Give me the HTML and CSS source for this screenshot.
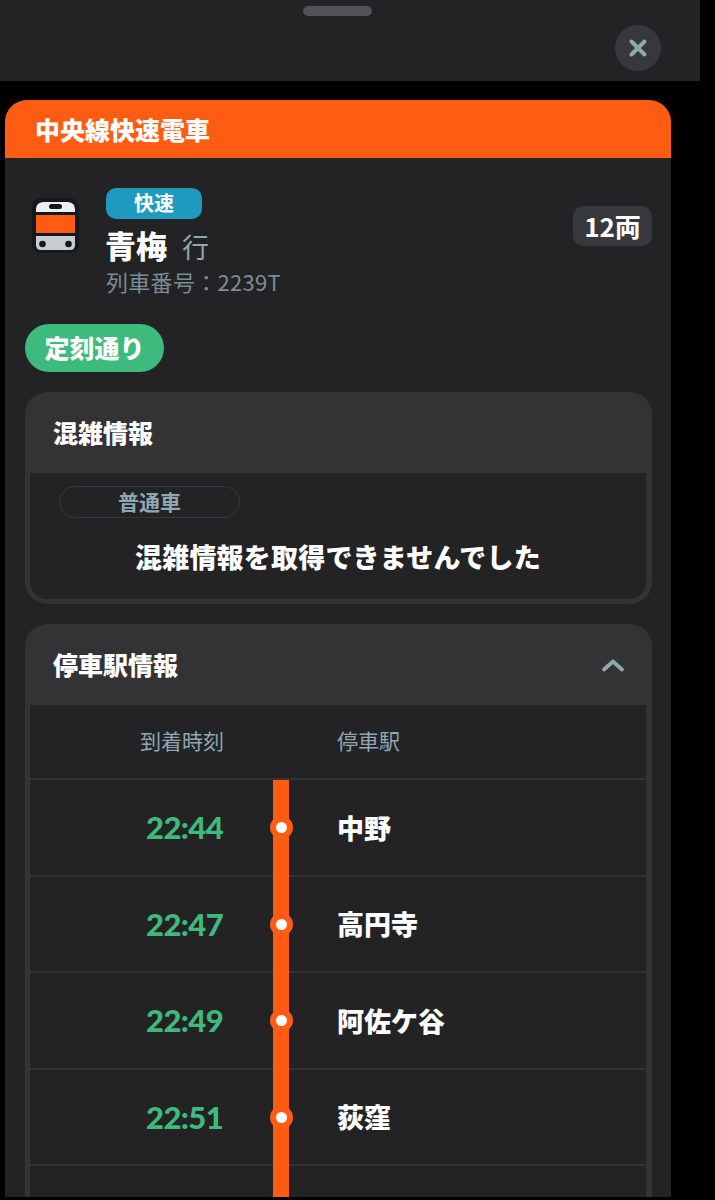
FILE: index.html
```html
<!DOCTYPE html>
<html lang="ja">
<head>
<meta charset="utf-8">
<title>中央線快速電車</title>
<link rel="stylesheet" href="styles.css">
</head>
<body>
<div class="page">
  <header class="sheet-top">
    <div class="grabber"></div>
    <button class="close" aria-label="閉じる">
      <svg width="20" height="20" viewBox="0 0 20 20"><path d="M3.500 3.500 L16.500 16.500 M16.500 3.500 L3.500 16.500" fill="none" stroke="#8fa6b3" stroke-width="4" stroke-linecap="round"/></svg>
    </button>
  </header>
  <main class="card">
    <div class="line-title">中央線快速電車</div>
    <div class="card-body">
      <div class="train">
        <svg class="train-icon" width="47" height="55" viewBox="0 0 47 55">
          <rect x="0" y="0" width="47" height="55" rx="9" fill="#14181f"/>
          <path d="M4 14 V11 Q4 5 11 4 H36 Q43 5 43 11 V14 Z" fill="#eceef0"/>
          <rect x="17" y="6" width="13" height="5" rx="2.500" fill="#14181f"/>
          <rect x="4" y="17" width="39" height="18" fill="#ff5c13"/>
          <path d="M4 38 H43 V47 Q43 52 38 52 H9 Q4 52 4 47 Z" fill="#c9ccd2"/>
          <circle cx="10.500" cy="46" r="3.300" fill="#14181f"/>
          <circle cx="36.500" cy="46" r="3.300" fill="#14181f"/>
        </svg>
        <div class="train-info">
          <span class="type-badge">快速</span>
          <div class="dest"><strong>青梅</strong><span>行</span></div>
          <div class="train-no">列車番号：2239T</div>
        </div>
        <span class="cars">12両</span>
      </div>
      <span class="status">定刻通り</span>

      <section class="panel panel-crowd">
        <h2 class="panel-head">混雑情報</h2>
        <div class="crowd-body">
          <div class="car-pill">普通車</div>
          <p class="crowd-msg">混雑情報を取得できませんでした</p>
        </div>
      </section>

      <section class="panel panel-stops">
        <h2 class="panel-head">停車駅情報
          <svg class="chevron" width="24" height="16" viewBox="0 0 24 16"><path d="M3 12.500 L12 4.500 L21 12.500" fill="none" stroke="#8fa6b3" stroke-width="3.800" stroke-linecap="round" stroke-linejoin="round"/></svg>
        </h2>
        <div class="stops">
          <div class="stops-head"><span class="col-time">到着時刻</span><span class="col-line"></span><span class="col-name">停車駅</span></div>
          <div class="stop"><span class="col-time">22:44</span><span class="col-line"><i class="dot"></i></span><span class="col-name">中野</span></div>
          <div class="stop"><span class="col-time">22:47</span><span class="col-line"><i class="dot"></i></span><span class="col-name">高円寺</span></div>
          <div class="stop"><span class="col-time">22:49</span><span class="col-line"><i class="dot"></i></span><span class="col-name">阿佐ケ谷</span></div>
          <div class="stop"><span class="col-time">22:51</span><span class="col-line"><i class="dot"></i></span><span class="col-name">荻窪</span></div>
          <div class="stop"><span class="col-time"></span><span class="col-line"></span><span class="col-name"></span></div>
        </div>
      </section>
    </div>
  </main>
</div>
</body>
</html>
```
FILE: styles.css
```css
* { box-sizing: border-box; }
html, body { margin: 0; height: 100%; background: #000; }
body {
  width: 715px;
  height: 1200px;
  overflow: hidden;
  font-family: "Noto Sans CJK JP", "Noto Sans", sans-serif;
  color: #fff;
}
.page { height: 1197px; overflow: hidden; }
.sheet-top {
  width: 700px;
  height: 81px;
  background: #232325;
  padding-top: 6px;
  display: flex;
  flex-direction: column;
}
.grabber {
  width: 69px;
  height: 10px;
  border-radius: 5px;
  background: #515156;
  margin-left: 303px;
}
.close {
  width: 46px;
  height: 46px;
  margin: 9px 0 0 615px;
  border: 0;
  padding: 0;
  border-radius: 50%;
  background: #37383b;
  display: flex;
  align-items: center;
  justify-content: center;
}
.card {
  width: 666px;
  margin: 19px 0 0 5px;
  height: 1097px;
  background: #232325;
  border-radius: 22px 22px 0 0;
  overflow: hidden;
}
.line-title {
  height: 58px;
  background: #ff5c13;
  padding-left: 30px;
  font-size: 25px;
  font-weight: 900;
  line-height: 58px;
}
.card-body { padding: 30px 19px 0 20px; }
.train { display: flex; height: 136px; }
.train-icon { margin: 10px 0 0 7px; flex: none; }
.train-info { margin-left: 27px; flex: 1; }
.type-badge {
  display: block;
  width: 96px;
  height: 31px;
  border-radius: 10px;
  background: #1f9abf;
  text-align: center;
  font-size: 20px;
  font-weight: 700;
  line-height: 30px;
}
.dest { display: flex; align-items: baseline; height: 48px; line-height: 51px; margin-left: -1px; }
.dest strong { font-size: 31px; font-weight: 900; }
.dest span { font-size: 27px; font-weight: 400; color: #8fa6b3; margin-left: 15px; }
.train-no { font-size: 22px; line-height: 28px; color: #7a8d98; letter-spacing: 0.3px; }
.cars {
  align-self: flex-start;
  margin-top: 18px;
  width: 79px;
  height: 40px;
  border-radius: 10px;
  background: #37383b;
  text-align: center;
  font-size: 26px;
  font-weight: 700;
  line-height: 39px;
}
.status {
  display: block;
  width: 139px;
  height: 48px;
  border-radius: 24px;
  background: #3dbb7c;
  text-align: center;
  font-size: 25px;
  font-weight: 900;
  line-height: 46px;
}
.panel {
  margin-top: 20px;
  width: 627px;
  border-radius: 22px;
  border: 5px solid #333335;
  border-right-width: 6px;
  border-top: 0;
  overflow: hidden;
}
.panel-head {
  margin: 0 -6px 0 -5px;
  height: 81px;
  background: #333335;
  padding: 0 28px;
  font-size: 25px;
  font-weight: 900;
  line-height: 79px;
  display: flex;
  align-items: center;
  justify-content: space-between;
}
.crowd-body { height: 126px; padding: 13px 0 0 29px; }
.car-pill {
  width: 181px;
  height: 32px;
  border: 1.500px solid #37383b;
  border-radius: 16px;
  text-align: center;
  font-size: 21px;
  font-weight: 700;
  line-height: 29px;
  color: #8fa6b3;
}
.crowd-msg {
  margin: 19px 0 0 76px;
  font-size: 27px;
  font-weight: 900;
  line-height: 40px;
  letter-spacing: 0.2px;
}
.chevron { margin-right: -1px; }
.stops-head, .stop {
  display: grid;
  grid-template-columns: 243px 16px 1fr;
  align-items: center;
  border-bottom: 2px solid #333335;
}
.stops-head { height: 75px; padding-bottom: 4px; }
.stop { height: 96.500px; }
.stops-head .col-time { font-size: 21px; color: #8fa6b3; padding-left: 110px; }
.stops-head .col-name { font-size: 21px; color: #8fa6b3; padding-left: 48px; }
.stop .col-time {
  font-family: "Lato", "Noto Sans", sans-serif;
  font-size: 31px;
  font-weight: 900;
  letter-spacing: -0.6px;
  color: #3dbb7c;
  padding-left: 116px;
}
.stop .col-name { font-size: 27px; font-weight: 900; padding-left: 48px; }
.col-line { align-self: stretch; position: relative; }
.stop .col-line { background: #ff5c13; margin-bottom: -2px; }
.dot {
  position: absolute;
  left: 50%;
  top: 50%;
  width: 23px;
  height: 23px;
  margin: -12px 0 0 -11.500px;
  border: 6px solid #ff5c13;
  border-radius: 50%;
  background: #fff;
}
```
